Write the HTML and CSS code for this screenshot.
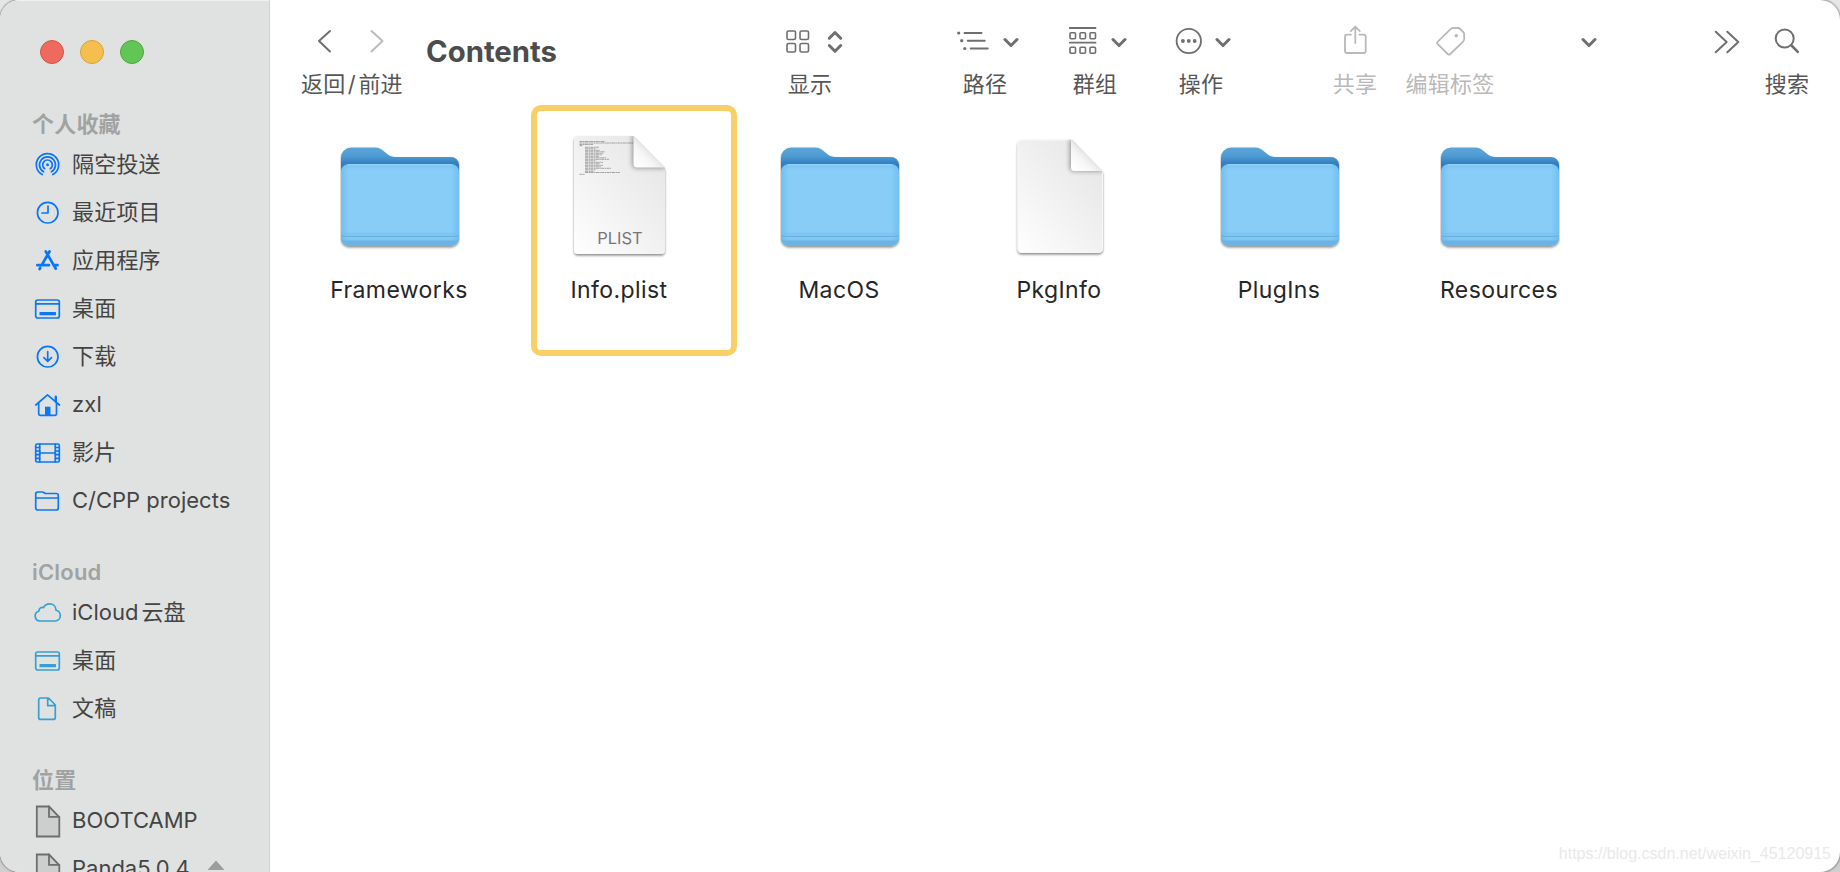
FILE: index.html
```html
<!DOCTYPE html>
<html lang="zh-CN">
<head>
  <meta charset="UTF-8">
  <meta name="viewport" content="width=device-width, initial-scale=1.0">
  <title>Contents</title>
  <link rel="stylesheet" href="styles.css">
</head>
<body>
  <!-- shared icon shapes -->
  <svg class="defs" width="0" height="0">
    <defs>
      <linearGradient id="folderBack" x1="0" y1="0" x2="0" y2="1">
        <stop offset="0" stop-color="#5ba5d8"/>
        <stop offset="0.08" stop-color="#519dd3"/>
        <stop offset="0.17" stop-color="#2f7dc2"/>
        <stop offset="1" stop-color="#2f7dc2"/>
      </linearGradient>
      <linearGradient id="folderFront" x1="0" y1="0" x2="0" y2="1">
        <stop offset="0" stop-color="#7cc6f3"/>
        <stop offset="0.08" stop-color="#88cdf7"/>
        <stop offset="0.8" stop-color="#88cdf7"/>
        <stop offset="1" stop-color="#7cc3ef"/>
      </linearGradient>
      <linearGradient id="folderSide" x1="0" y1="0" x2="1" y2="0">
        <stop offset="0" stop-color="#5fb0e4" stop-opacity="0.5"/>
        <stop offset="0.07" stop-color="#5fb0e4" stop-opacity="0"/>
        <stop offset="0.93" stop-color="#5fb0e4" stop-opacity="0"/>
        <stop offset="1" stop-color="#5fb0e4" stop-opacity="0.5"/>
      </linearGradient>
      <linearGradient id="page" x1="1" y1="0" x2="0.1" y2="1">
        <stop offset="0" stop-color="#e4e4e4"/>
        <stop offset="0.5" stop-color="#f0f0f0"/>
        <stop offset="1" stop-color="#fdfdfd"/>
      </linearGradient>
      <linearGradient id="fold" x1="0.6" y1="0.4" x2="0.1" y2="0.9">
        <stop offset="0" stop-color="#dedede"/>
        <stop offset="0.5" stop-color="#f6f6f6"/>
        <stop offset="1" stop-color="#ffffff"/>
      </linearGradient>
      <filter id="shadow" x="-10%" y="-10%" width="120%" height="125%">
        <feDropShadow dx="0" dy="1.6" stdDeviation="1" flood-color="#000" flood-opacity="0.45"/>
      </filter>
      <filter id="soft" x="-50%" y="-50%" width="200%" height="200%">
        <feGaussianBlur stdDeviation="2.8"/>
      </filter>
      <clipPath id="plistClip">
        <path d="M18 6H73.5L105 38V120.500a4 4 0 0 1-4 4H18a4 4 0 0 1-4-4V10a4 4 0 0 1 4-4z"/>
      </clipPath>
      <clipPath id="pkgClip">
        <path d="M21.500 9.500H71.500L103 42V120a4 4 0 0 1-4 4H21.500a4 4 0 0 1-4-4V13.500a4 4 0 0 1 4-4z"/>
      </clipPath>
    </defs>

    <symbol id="folder" viewBox="0 0 120 130">
      <g filter="url(#shadow)">
        <path fill="url(#folderBack)" d="M1 27.500a10 10 0 0 1 10-10H35c4 0 6 1.500 8.500 3.500l4 3.200c2.500 2 4.500 2.700 8 2.700H111a8 8 0 0 1 8 8V108a8 8 0 0 1-8 7.500H9a8 8 0 0 1-8-8z"/>
        <rect x="1" y="34" width="118" height="81.700" rx="8" fill="url(#folderFront)"/>
      </g>
      <rect x="1" y="34" width="118" height="81.700" rx="8" fill="url(#folderSide)"/>
      <path d="M8 34.700H112" stroke="#9ed7fa" stroke-width="0.800"/>
      <path d="M1.200 103.500H118.800" stroke="#79c0ed" stroke-width="1.200"/>
      <path d="M1.200 106.300H118.800" stroke="#67b2e2" stroke-width="1.200"/>
      <path d="M1.700 110.500H118.300a8 8 0 0 1-7.300 5.200H9a8 8 0 0 1-7.300-5.200z" fill="#69b4e4"/>
    </symbol>

    <symbol id="chevron" viewBox="0 0 16 10">
      <path d="M2 2l6 6 6-6" fill="none" stroke="currentColor" stroke-width="3" stroke-linecap="round" stroke-linejoin="round"/>
    </symbol>

    <symbol id="desktop" viewBox="0 0 28 28">
      <rect x="1.700" y="5" width="23.600" height="18" rx="2"/>
      <path d="M2 8.800H25"/>
      <rect class="solid" x="5.500" y="17" width="16.500" height="3.300" rx="0.500"/>
    </symbol>

    <symbol id="volume" viewBox="0 0 28 34">
      <path class="paper" d="M2.800 2.500H15L25.300 13V32.500H2.800z"/>
      <path d="M15 2.500V12.800H25.300"/>
    </symbol>
  </svg>

  <div class="window">
    <aside class="sidebar">
      <div class="lights">
        <span class="light close"></span>
        <span class="light minimize"></span>
        <span class="light zoom"></span>
      </div>

      <section class="group blue">
        <h2>个人收藏</h2>
        <ul>
          <li>
            <svg class="icon" viewBox="0 0 28 28">
              <path d="M8.200 23.600a11.200 11.200 0 1 1 10.600 0"/>
              <path d="M9.600 20.800a8 8 0 1 1 7.800 0"/>
              <path d="M10.700 17.700a4.800 4.800 0 1 1 5.600 0"/>
              <circle class="solid" cx="13.500" cy="13.700" r="1.500"/>
            </svg>
            隔空投送
          </li>
          <li>
            <svg class="icon" viewBox="0 0 28 28">
              <circle cx="13.700" cy="13.700" r="10.300"/>
              <path d="M14 7V14H8"/>
            </svg>
            最近项目
          </li>
          <li>
            <svg class="icon bold" viewBox="0 0 28 28">
              <path d="M15.500 4.500L8.600 16.500M11.800 4.500L21.800 21.700M3.300 18.200H15M19.500 18.200H23.500M6.200 21L5.600 22"/>
            </svg>
            应用程序
          </li>
          <li>
            <svg class="icon"><use href="#desktop"/></svg>
            桌面
          </li>
          <li>
            <svg class="icon" viewBox="0 0 28 28">
              <circle cx="13.700" cy="13.700" r="10.300"/>
              <path d="M13.700 8.700V18.200M9.900 14.700l3.800 3.700L17.500 14.700"/>
            </svg>
            下载
          </li>
          <li>
            <svg class="icon" viewBox="0 0 28 28">
              <path d="M1.800 14L13.500 3.800L25.500 14M4.700 12V22.800a1.500 1.500 0 0 0 1.500 1.500H21a1.500 1.500 0 0 0 1.500-1.500V12"/>
              <path d="M21.800 5.700V10.500" stroke-width="2.400"/>
              <rect class="solid" x="11" y="15.700" width="5.500" height="8.600"/>
            </svg>
            zxl
          </li>
          <li>
            <svg class="icon" viewBox="0 0 28 28">
              <rect x="1.700" y="5" width="23.600" height="18" rx="1.500"/>
              <path d="M5.700 5V23M21.300 5V23M5.700 14H21.300"/>
              <path d="M2 8.500H5.700M2 12H5.700M2 15.700H5.700M2 19.300H5.700M21.300 8.500H25M21.300 12H25M21.300 15.700H25M21.300 19.300H25"/>
            </svg>
            影片
          </li>
          <li>
            <svg class="icon" viewBox="0 0 28 28">
              <path d="M1.700 21.200V7a2 2 0 0 1 2-2H8.300c1.700 0 2 1.500 3.700 1.500H22.300a2 2 0 0 1 2 2V21a2 2 0 0 1-2 2H3.700a2 2 0 0 1-2-2zM1.700 11H24.300"/>
            </svg>
            <span class="latin">C/CPP projects</span>
          </li>
        </ul>
      </section>

      <section class="group cyan">
        <h2>iCloud</h2>
        <ul>
          <li>
            <svg class="icon" viewBox="0 0 28 28">
              <path d="M6 22a5 5 0 0 1-1.200-9.800c0-2.800 2.200-4.200 4.700-3.600C11 5.900 13 4.900 15.500 4.900c3.700 0 6.400 2.700 6.500 6.300 2.400.6 4.300 2.400 4.300 5.300 0 3.200-2.300 5.500-5.300 5.500z"/>
            </svg>
            <span class="latin">iCloud<span class="cjk-gap">云盘</span></span>
          </li>
          <li>
            <svg class="icon"><use href="#desktop"/></svg>
            桌面
          </li>
          <li>
            <svg class="icon" viewBox="0 0 28 28">
              <path d="M6.700 3H14.500L21.300 10V22.400a2 2 0 0 1-2 2H6.700a2 2 0 0 1-2-2V5a2 2 0 0 1 2-2zM13.700 3.300V10.700H21"/>
            </svg>
            文稿
          </li>
        </ul>
      </section>

      <section class="group gray">
        <h2>位置</h2>
        <ul>
          <li>
            <svg class="icon tall"><use href="#volume"/></svg>
            <span class="latin">BOOTCAMP</span>
          </li>
          <li>
            <svg class="icon tall"><use href="#volume"/></svg>
            <span class="latin">Panda5.0.4</span>
            <svg class="eject" viewBox="0 0 18 18">
              <path d="M9 1.500L17.500 11H0.500zM0.500 13.300H17.500V16.300H0.500z"/>
            </svg>
          </li>
        </ul>
      </section>
    </aside>

    <main class="content">
      <header class="toolbar">
        <div class="tool nav">
          <svg width="102" height="42" viewBox="301 20 102 42">
            <path d="M330 31L319 41L330 51.500"/>
            <path class="off" d="M371.500 31L382.500 41L371.500 51.500"/>
          </svg>
          <span>返回<i class="slash">/</i>前进</span>
        </div>
        <h1>Contents</h1>
        <div class="tool view">
          <svg width="120" height="42" viewBox="750 20 120 42">
            <g stroke-width="1.600">
              <rect x="787" y="31" width="8.500" height="8.500" rx="1.500"/>
              <rect x="800" y="31" width="8.500" height="8.500" rx="1.500"/>
              <rect x="787" y="43.500" width="8.500" height="8.500" rx="1.500"/>
              <rect x="800" y="43.500" width="8.500" height="8.500" rx="1.500"/>
            </g>
            <path class="thick" d="M829.300 38.300L835 32.500L840.700 38.300M829.300 45.500L835 51.300L840.700 45.500"/>
          </svg>
          <span>显示</span>
        </div>
        <div class="tool path">
          <svg width="110" height="42" viewBox="930 20 110 42">
            <path d="M964.500 33H981.500M967.700 40.700H984.700M970.700 48.500H987.700"/>
            <g class="dots">
              <circle cx="958.700" cy="33" r="1.600"/>
              <circle cx="961.700" cy="40.700" r="1.600"/>
              <circle cx="964.800" cy="48.500" r="1.600"/>
            </g>
            <use href="#chevron" x="1003" y="37.500" width="16" height="10"/>
          </svg>
          <span>路径</span>
        </div>
        <div class="tool arrange">
          <svg width="110" height="42" viewBox="1040 20 110 42">
            <path d="M1069.800 28H1095.500M1069.800 42.700H1095.500" stroke-width="1.800"/>
            <g stroke-width="1.600">
              <rect x="1070" y="32.700" width="5.500" height="6" rx="1"/>
              <rect x="1080" y="32.700" width="5.500" height="6" rx="1"/>
              <rect x="1090" y="32.700" width="5.500" height="6" rx="1"/>
              <rect x="1070" y="47.200" width="5.500" height="6" rx="1"/>
              <rect x="1080" y="47.200" width="5.500" height="6" rx="1"/>
              <rect x="1090" y="47.200" width="5.500" height="6" rx="1"/>
            </g>
            <use href="#chevron" x="1111" y="37.500" width="16" height="10"/>
          </svg>
          <span>群组</span>
        </div>
        <div class="tool action">
          <svg width="102" height="42" viewBox="1150 20 102 42">
            <circle cx="1188.800" cy="41" r="12.200" stroke-width="1.800"/>
            <g class="dots">
              <circle cx="1182.900" cy="41" r="1.900"/>
              <circle cx="1188.800" cy="41" r="1.900"/>
              <circle cx="1194.700" cy="41" r="1.900"/>
            </g>
            <use href="#chevron" x="1215" y="37.500" width="16" height="10"/>
          </svg>
          <span>操作</span>
        </div>
        <div class="tool share disabled">
          <svg width="90" height="42" viewBox="1310 20 90 42">
            <path d="M1351 34.700H1347a2 2 0 0 0-2 2V51a2 2 0 0 0 2 2H1363.700a2 2 0 0 0 2-2V36.700a2 2 0 0 0-2-2H1359.500M1355.300 43V27M1350.800 31.200L1355.300 26.700L1359.800 31.200"/>
          </svg>
          <span>共享</span>
        </div>
        <div class="tool tags disabled">
          <svg width="100" height="42" viewBox="1400 20 100 42">
            <path d="M1437.800 41.600L1450.300 29.300Q1451.500 28 1453.200 28H1457.800Q1459.200 28 1460.200 29L1463.200 32Q1464.200 33 1464.200 34.400V38.800Q1464.200 40.400 1463 41.600L1450.300 54Q1449 55.200 1447.700 54L1437.800 44.200Q1436.500 42.900 1437.800 41.600z"/>
            <g class="dots"><circle cx="1456.300" cy="35.700" r="1.800"/></g>
          </svg>
          <span>编辑标签</span>
        </div>
        <div class="tool dropdown">
          <svg width="54" height="42" viewBox="1562 20 54 42">
            <use href="#chevron" x="1581" y="37.500" width="16" height="10"/>
          </svg>
        </div>
        <div class="tool more">
          <svg width="52" height="42" viewBox="1700 20 52 42">
            <path d="M1715.700 31.700L1726.700 42L1715.700 52.300M1727.300 31.700L1738.300 42L1727.300 52.300"/>
          </svg>
        </div>
        <div class="tool search">
          <svg width="70" height="42" viewBox="1752 20 70 42">
            <circle cx="1784.700" cy="38.500" r="9"/>
            <path d="M1791.500 45.500L1797.800 51.800" stroke-width="2.600"/>
          </svg>
          <span>搜索</span>
        </div>
      </header>

      <div class="files">
        <figure class="file">
          <svg width="120" height="130"><use href="#folder"/></svg>
          <figcaption>Frameworks</figcaption>
        </figure>
        <figure class="file marked">
          <svg width="120" height="130" viewBox="0 0 120 130">
            <g filter="url(#shadow)">
              <path fill="url(#page)" d="M18 6H73.5L105 38V120a4 4 0 0 1-4 4H18a4 4 0 0 1-4-4V10a4 4 0 0 1 4-4z"/>
            </g>
            <g class="code">
              <path d="M19.500 11.500H45M19.500 13H73M19.500 14.500H33M19.500 15.700H23M25 17.300H39M25 18.800H36M25 20.300H40M25 21.800H45M25 23.300H43M25 24.800H42M25 26.300H39M25 27.800H46M25 29.300H49M25 30.800H36M25 32.300H43M25 33.800H40M25 35.300H43M25 36.800H41M25 38.300H51M25 39.800H36M25 41.300H34M25 42.500H60M19.500 44.300H25"/>
            </g>
            <g clip-path="url(#plistClip)">
              <path d="M72.500 4V34a4 4 0 0 0 4 4H106V36L74 4z" fill="#000" opacity="0.4" filter="url(#soft)"/>
            </g>
            <path fill="url(#fold)" d="M73.500 6L105 37.500H77a3.500 3.500 0 0 1-3.500-3.500z"/>
            <text x="60" y="114">PLIST</text>
          </svg>
          <figcaption>Info.plist</figcaption>
        </figure>
        <figure class="file">
          <svg width="120" height="130"><use href="#folder"/></svg>
          <figcaption>MacOS</figcaption>
        </figure>
        <figure class="file">
          <svg width="120" height="130" viewBox="0 0 120 130">
            <g filter="url(#shadow)">
              <path fill="url(#page)" stroke="#f8f8f8" d="M21.500 10H71.500L102.500 42V118.500a4 4 0 0 1-4 4H21.500a3.500 3.500 0 0 1-3.500-3.500V13.500a3.500 3.500 0 0 1 3.500-3.500z"/>
            </g>
            <g clip-path="url(#pkgClip)">
              <path d="M70 8V37a4 4 0 0 0 4 4H104V40L71 8z" fill="#000" opacity="0.4" filter="url(#soft)"/>
            </g>
            <path fill="url(#fold)" d="M71 9.500L102.500 41H74.500a3.500 3.500 0 0 1-3.500-3.500z"/>
          </svg>
          <figcaption>PkgInfo</figcaption>
        </figure>
        <figure class="file">
          <svg width="120" height="130"><use href="#folder"/></svg>
          <figcaption>PlugIns</figcaption>
        </figure>
        <figure class="file">
          <svg width="120" height="130"><use href="#folder"/></svg>
          <figcaption>Resources</figcaption>
        </figure>
      </div>

      <div class="watermark">https://blog.csdn.net/weixin_45120915</div>
    </main>
  </div>
</body>
</html>
```

FILE: styles.css
```css
* {
  box-sizing: border-box;
}
html, body {
  margin: 0;
  height: 100%;
  overflow: hidden;
}
body {
  background: linear-gradient(#e6e6e6, #cfcfcf);
  font-family: Inter, "Noto Sans CJK SC", sans-serif;
  font-size: 22px;
  color: #444;
}
h1, h2, ul, figure {
  margin: 0;
  padding: 0;
}
.defs {
  position: absolute;
}
.window {
  display: flex;
  width: 1840px;
  height: 872px;
  border-radius: 20px;
  overflow: hidden;
  background: #fff;
  box-shadow: 0 0 2px 1px rgba(0, 0, 0, 0.35);
}

/* sidebar */
.sidebar {
  width: 270px;
  flex: none;
  height: 872px;
  overflow: hidden;
  background: #e0e2e1;
  border-right: 1px solid #d0d2d1;
  box-shadow: inset 0 1px 0 #f0f1f1;
  letter-spacing: 0.2px;
}
.lights {
  display: flex;
  gap: 16px;
  padding: 40px 40px 0;
  height: 108px;
}
.light {
  width: 24px;
  height: 24px;
  border-radius: 50%;
  border: 1px solid;
}
.close {
  background: #ee6a5f;
  border-color: #d35549;
}
.minimize {
  background: #f5bf4f;
  border-color: #d9a13c;
}
.zoom {
  background: #62c655;
  border-color: #50a73f;
}
.group {
  margin-bottom: 32px;
}
.group h2 {
  height: 32px;
  line-height: 32px;
  padding-left: 32px;
  font-size: 22px;
  font-weight: 600;
  color: #a1a3a2;
}
.group ul {
  list-style: none;
}
.group li {
  display: flex;
  align-items: center;
  height: 48px;
  line-height: 32px;
  padding-left: 34px;
  white-space: nowrap;
}
.icon {
  flex: none;
  width: 28px;
  height: 28px;
  margin: 2px 10px 0 0;
  fill: none;
  stroke: currentColor;
  stroke-width: 1.7;
  stroke-linecap: round;
  stroke-linejoin: round;
}
.icon.bold {
  stroke-width: 2.7;
}
.icon.tall {
  height: 34px;
  stroke-width: 1.8;
  stroke-linejoin: miter;
}
.solid {
  fill: currentColor;
  stroke: none;
}
.paper {
  fill: #cdcfce;
}
.blue .icon {
  color: #0a77fa;
}
.cyan .icon {
  color: #36a0d2;
}
.gray .icon {
  color: #6d6e6e;
}
.latin {
  letter-spacing: 0;
}
.cjk-gap {
  margin-left: 3px;
}
.eject {
  width: 18px;
  height: 18px;
  margin: -1px 0 0 17px;
  fill: #9c9e9d;
}

/* toolbar */
.content {
  flex: 1;
  display: flex;
  flex-direction: column;
}
.toolbar {
  display: flex;
  height: 110px;
  padding-top: 20px;
  color: #6f6f6f;
}
.toolbar h1 {
  width: 324px;
  height: 64px;
  line-height: 64px;
  font-size: 29.3px;
  font-weight: 700;
  color: #4c4c4c;
}
.tool {
  display: flex;
  flex-direction: column;
  align-items: center;
  white-space: nowrap;
}
.tool svg {
  flex: none;
  fill: none;
  stroke: currentColor;
  stroke-width: 2;
  stroke-linecap: round;
  stroke-linejoin: round;
}
.tool span {
  height: 44px;
  line-height: 44px;
  letter-spacing: 0.2px;
  color: #565656;
}
.tool .thick {
  stroke-width: 3;
}
.tool .off {
  stroke: #bcbcbc;
}
.tool .dots {
  fill: currentColor;
  stroke: none;
}
.slash {
  display: inline-block;
  width: 13px;
  text-align: center;
  font-style: normal;
}
.nav {
  width: 156px;
  padding-left: 31px;
  align-items: flex-start;
}
.view {
  width: 120px;
}
.path {
  width: 110px;
  margin-left: 60px;
}
.arrange {
  width: 110px;
}
.action {
  width: 102px;
}
.share {
  width: 90px;
  margin-left: 58px;
}
.tags {
  width: 100px;
}
.dropdown {
  width: 54px;
  margin-left: 62px;
}
.more {
  width: 52px;
  margin-left: 84px;
}
.search {
  width: 70px;
}
.disabled, .disabled span {
  color: #b9b9b9;
}
.disabled svg {
  stroke-width: 1.8;
}

/* files */
.files {
  display: grid;
  grid-template-columns: repeat(6, 220px);
  flex: 1;
  padding: 20px 0 0 20px;
}
.file {
  position: relative;
  display: flex;
  flex-direction: column;
  align-items: center;
}
.file figcaption {
  height: 60px;
  line-height: 60px;
  padding-right: 2px;
  font-size: 23px;
  letter-spacing: 0.4px;
  color: #262626;
}
.file text {
  font-size: 16.5px;
  text-anchor: middle;
  fill: #777;
}
.code path {
  fill: none;
  stroke: #8f8f8f;
  stroke-width: 0.8;
  stroke-dasharray: 3 0.5 1.5 0.4;
}
/* highlight frame around Info.plist */
.marked::after {
  content: "";
  position: absolute;
  left: 21px;
  top: -25px;
  width: 194px;
  height: 239px;
  border: 6px solid #f9cf67;
  border-radius: 10px;
}
.watermark {
  padding: 0 9px 8px 0;
  text-align: right;
  font: 16px/20px "Liberation Sans", Arial, sans-serif;
  color: #e9e9e9;
}
```
